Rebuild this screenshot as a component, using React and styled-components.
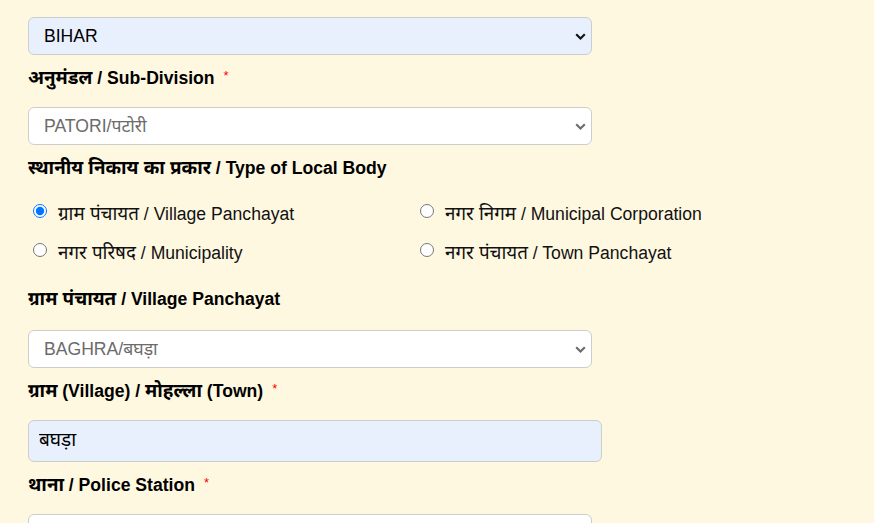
import React from "react";
import styled, { createGlobalStyle } from "styled-components";

const Global = createGlobalStyle`
  html, body { margin: 0; padding: 0; background: #fff8e1; }
  body {
    font-family: "Liberation Sans", Arial, "Noto Sans Devanagari", "Lohit Devanagari", "Noto Sans", sans-serif;
    color: #000;
  }
`;

const Page = styled.div`
  background: #fff8e1;
  padding: 17px 0 0 28px;
  box-sizing: border-box;
  overflow: hidden;
  height: 523px;
`;

const Field = styled.div`
  display: flex;
  flex-direction: column;
`;

const Label = styled.div`
  height: 24px;
  font-size: 17.6px;
  line-height: 24px;
  font-weight: 700;
  color: #000;
  margin-top: ${(p) => p.$top ?? 11}px;
  margin-bottom: ${(p) => p.$bottom ?? 17}px;
  white-space: nowrap;
`;

const Hi = styled.span`
  font-size: 18.8px;
  line-height: 0;
`;

const Star = styled.span`
  color: #ff0000;
  font-size: 13px;
  font-weight: 400;
  margin-left: 9px;
  position: relative;
  top: -4px;
`;

const SelectWrap = styled.div`
  position: relative;
  width: 564px;
  height: 38px;
  flex-shrink: 0;
`;

const SelectBox = styled.select`
  appearance: none;
  -webkit-appearance: none;
  width: 100%;
  height: 100%;
  box-sizing: border-box;
  border: 1px solid #cdcdcd;
  border-radius: 6px;
  background: ${(p) => (p.$filled ? "#e8f0fe" : "#ffffff")};
  color: ${(p) => (p.$muted ? "#6b6b6b" : "#000")};
  font-family: inherit;
  font-size: 17.6px;
  padding: 0 30px 0 15px;
  outline: none;
  margin: 0;
`;

const Chevron = styled.svg`
  position: absolute;
  right: 6px;
  top: 16px;
  width: 11px;
  height: 7px;
  pointer-events: none;
`;

const TextInput = styled.input`
  box-sizing: border-box;
  width: 574px;
  height: 42px;
  flex-shrink: 0;
  border: 1px solid #cdcdcd;
  border-radius: 6px;
  background: #e8f0fe;
  color: #000;
  font-family: inherit;
  font-size: 19px;
  padding: 0 10px;
  outline: none;
  margin: 0;
`;

const RadioGrid = styled.div`
  display: grid;
  grid-template-columns: 387px 1fr;
  row-gap: 15px;
  margin-top: 22px;
`;

const RadioOption = styled.label`
  display: flex;
  align-items: center;
  height: 24px;
  font-size: 17.6px;
  line-height: 24px;
  color: #111;
  white-space: nowrap;
`;

const RadioInput = styled.input`
  width: 14px;
  height: 14px;
  margin: 0 11px 0 5px;
  position: relative;
  top: -3px;
  flex-shrink: 0;
`;

function Select({ value, filled, muted }) {
  return (
    <SelectWrap>
      <SelectBox $filled={filled} $muted={muted} defaultValue={value}>
        <option value={value}>{value}</option>
      </SelectBox>
      <Chevron viewBox="0 0 11 7">
        <polyline
          points="1.2,1.2 5.5,5.5 9.8,1.2"
          fill="none"
          stroke={muted ? "#6b6b6b" : "#111"}
          strokeWidth="2.1"
        />
      </Chevron>
    </SelectWrap>
  );
}

function Radio({ hi, en, checked }) {
  return (
    <RadioOption>
      <RadioInput type="radio" name="localbody" defaultChecked={checked} />
      <Hi>{hi}</Hi>&nbsp;/ {en}
    </RadioOption>
  );
}

export default function App() {
  return (
    <>
      <Global />
      <Page>
        <Field>
          <Select value="BIHAR" filled />
          <Label>
            <Hi>अनुमंडल</Hi> / Sub-Division<Star>*</Star>
          </Label>
          <Select value="PATORI/पटोरी" muted />
          <Label $bottom={0}>
            <Hi>स्थानीय निकाय का प्रकार</Hi> / Type of Local Body
          </Label>
          <RadioGrid>
            <Radio hi="ग्राम पंचायत" en="Village Panchayat" checked />
            <Radio hi="नगर निगम" en="Municipal Corporation" />
            <Radio hi="नगर परिषद" en="Municipality" />
            <Radio hi="नगर पंचायत" en="Town Panchayat" />
          </RadioGrid>
          <Label $top={22} $bottom={19}>
            <Hi>ग्राम पंचायत</Hi> / Village Panchayat
          </Label>
          <Select value="BAGHRA/बघड़ा" muted />
          <Label>
            <Hi>ग्राम</Hi> (Village) / <Hi>मोहल्ला</Hi> (Town)<Star>*</Star>
          </Label>
          <TextInput defaultValue="बघड़ा" />
          <Label>
            <Hi>थाना</Hi> / Police Station<Star>*</Star>
          </Label>
          <Select value="" />
        </Field>
      </Page>
    </>
  );
}
